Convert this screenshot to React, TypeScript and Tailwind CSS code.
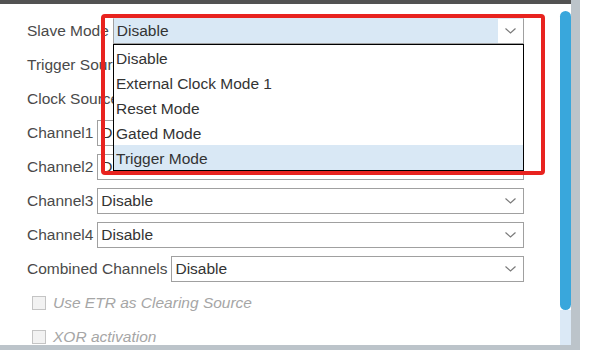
import React from 'react'

const font = { fontFamily: '"Liberation Sans", Arial, sans-serif' }

function Chevron() {
    return (
        <svg width="11" height="6" viewBox="0 0 11 6" className="shrink-0">
            <path d="M0.5 0.5 L5.5 5 L10.5 0.5" fill="none" stroke="#7a7a7a" strokeWidth="1.2" />
        </svg>
    )
}

function Select({ value, active = false }: { value: string; active?: boolean }) {
    return (
        <div className={`flex-1 h-[26px] flex items-stretch border border-[#a0a0a0] ${active ? 'border-t-[#dae8f5]' : ''}`}>
            <div className={`flex-1 flex items-center pl-[3px] text-[15.5px] text-[#333] ${active ? 'bg-[#d9e8f5]' : ''}`}>
                {value}
            </div>
            <div className="w-[25px] flex items-center justify-center">
                <Chevron />
            </div>
        </div>
    )
}

function Row({ label, value, active }: { label: string; value: string; active?: boolean }) {
    return (
        <div className="flex items-center h-[26px] shrink-0">
            <span className="text-[15.5px] text-[#4a4a4a] whitespace-nowrap mr-[4px]">{label}</span>
            <Select value={value} active={active} />
        </div>
    )
}

function Check({ label }: { label: string }) {
    return (
        <div className="flex items-center h-[26px] shrink-0 pl-[5px]">
            <div className="w-[14px] h-[14px] border border-[#c4c4c4] bg-[#f2f2f2] mr-[7px]" />
            <span className="text-[15.5px] italic text-[#a6a6a6]">{label}</span>
        </div>
    )
}

const options = ['Disable', 'External Clock Mode 1', 'Reset Mode', 'Gated Mode', 'Trigger Mode']

export default function App() {
    return (
        <div className="w-[601px] h-[350px] flex bg-white overflow-hidden" style={font}>
            <div className="w-[571px] flex flex-col">
                <div className="h-[4px] shrink-0 bg-[#525252]" />
                <div className="flex-1 flex min-h-0">
                    <div className="relative w-[560px] flex flex-col gap-[8px] pt-[14px] pl-[27px] pr-[36px] overflow-hidden">
                        <Row label="Slave Mode" value="Disable" active />
                        <Row label="Trigger Source" value="Disable" />
                        <Row label="Clock Source" value="Disable" />
                        <Row label="Channel1" value="Disable" />
                        <Row label="Channel2" value="Disable" />
                        <Row label="Channel3" value="Disable" />
                        <Row label="Channel4" value="Disable" />
                        <Row label="Combined Channels" value="Disable" />
                        <Check label="Use ETR as Clearing Source" />
                        <Check label="XOR activation" />

                        <div className="absolute left-[113px] top-[40px] w-[411px] h-[127px] bg-white border border-black flex flex-col">
                            {options.map((o, i) => (
                                <div
                                    key={o}
                                    className={`h-[25px] flex items-center pl-[2px] pt-[2px] text-[15.5px] text-[#333] ${i === options.length - 1 ? 'bg-[#d9e8f5]' : ''}`}
                                >
                                    {o}
                                </div>
                            ))}
                        </div>

                        <div className="absolute left-[101px] top-[10px] w-[444px] h-[161px] border-4 border-[#e8231f] rounded-[4px]" />
                    </div>
                    <div className="w-[11px] flex flex-col">
                        <div className="h-[7px]" />
                        <div className="h-[299px] bg-[#39a7dc] rounded-full" />
                        <div className="flex-1 bg-[#dbe9f6]" />
                    </div>
                </div>
                <div className="h-[5px] shrink-0 bg-[#bcc4ca]" />
            </div>
            <div className="w-[9px] bg-[#bcc4ca]" />
            <div className="flex-1 bg-white" />
        </div>
    )
}
